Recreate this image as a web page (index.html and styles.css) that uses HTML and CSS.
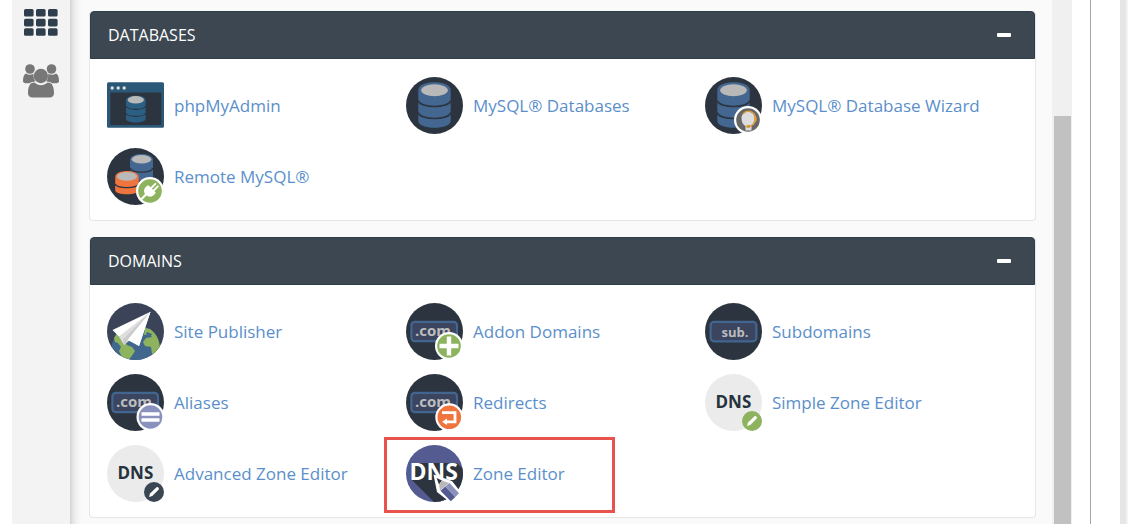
FILE: index.html
```
<!DOCTYPE html>
<html lang="en">
<head>
    <meta charset="UTF-8">
    <meta name="viewport" content="width=device-width, initial-scale=1.0">
    <title>cPanel</title>
    <link rel="stylesheet" href="styles.css">
</head>
<body>

<!-- shared icon parts -->
<svg class="sprite" aria-hidden="true">
    <symbol id="database" viewBox="0 0 57 57">
        <circle cx="28.5" cy="28.5" r="28.5" fill="#2c353f"/>
        <path d="M12.3 13.3C12.3 2.7 44.7 2.7 44.7 13.3V44C44.7 53 12.3 53 12.3 44Z" fill="#436791"/>
        <ellipse cx="28.5" cy="13.2" rx="13.3" ry="6" fill="#b9b9b9"/>
        <path d="M12.3 23.5C14 31.5 43 31.5 44.7 23.5M12.3 35.5C14 43.5 43 43.5 44.7 35.5" fill="none" stroke="#2c353f" stroke-width="1.7"/>
    </symbol>
    <symbol id="dotcom" viewBox="0 0 57 57">
        <circle cx="28.5" cy="28.5" r="28.5" fill="#2c353f"/>
        <rect x="5.4" y="18.8" width="45.6" height="19.4" rx="3.5" fill="#3b4560" stroke="#426690" stroke-width="2.2"/>
        <text x="9" y="32.5" font-size="15" font-weight="700" fill="#bdbdbd">.com</text>
    </symbol>
    <symbol id="dns" viewBox="0 0 57 57">
        <circle cx="28.5" cy="28.5" r="28.5" fill="#ebebeb"/>
        <text x="10.5" y="34" font-size="17" font-weight="700" fill="#26323c">DNS</text>
    </symbol>
    <symbol id="pencil" viewBox="0 0 20 20">
        <circle cx="10" cy="10" r="10"/>
        <path d="M5 15L6 11.6L12.5 5.2C13.5 4.3 15.6 6.3 14.7 7.4L8.3 14Z" fill="#fff"/>
    </symbol>
</svg>

<div class="page">
    <nav class="sidebar">
        <a href="#" aria-label="Home">
            <svg width="34" height="28" viewBox="0 0 34 28" fill="#2f3e4c">
                <rect x="0" y="0" width="9.6" height="7.6" rx="1.6"/><rect x="12" y="0" width="9.6" height="7.6" rx="1.6"/><rect x="24" y="0" width="9.6" height="7.6" rx="1.6"/>
                <rect x="0" y="9.8" width="9.6" height="7.6" rx="1.6"/><rect x="12" y="9.8" width="9.6" height="7.6" rx="1.6"/><rect x="24" y="9.8" width="9.6" height="7.6" rx="1.6"/>
                <rect x="0" y="19.2" width="9.6" height="7.6" rx="1.6"/><rect x="12" y="19.2" width="9.6" height="7.6" rx="1.6"/><rect x="24" y="19.2" width="9.6" height="7.6" rx="1.6"/>
            </svg>
        </a>
        <a href="#" aria-label="User Manager">
            <svg width="36" height="34" viewBox="0 0 36 34" fill="#777">
                <circle cx="7" cy="5" r="4.8"/>
                <circle cx="28.5" cy="5" r="4.8"/>
                <path d="M3 9.5C5.5 11.2 8 11 10.5 9.8C10.3 13 10.9 15.5 12.5 17.6C9.5 17.8 8 18.5 6.6 19.2H2.5C1 19.2 0 18.3 0 17C0 13.5 .8 10.5 3 9.5Z"/>
                <path d="M33 9.5C30.5 11.2 28 11 25.2 9.8C25.4 13 24.8 15.5 23.2 17.6C26.2 17.8 27.7 18.5 29.2 19.2H33.4C35 19.2 36 18.3 36 17C36 13.5 35.2 10.5 33 9.5Z"/>
                <circle cx="17.9" cy="12" r="7.2"/>
                <path d="M11.2 18.6C15.5 22 20.5 22 24.8 18.6C29.5 18.6 31 23.5 31 29C31 31.8 29.5 33.6 26.5 33.6H9.5C6.5 33.6 5 31.8 5 29C5 23.5 6.5 18.6 11.2 18.6Z"/>
            </svg>
        </a>
    </nav>

    <main class="content">
        <section class="panel">
            <div class="panel-head">
                <h2>DATABASES</h2>
                <button type="button" class="collapse" aria-label="Collapse Databases"></button>
            </div>
            <div class="panel-body">
                <a href="#" class="item">
                    <svg class="icon" viewBox="0 0 57 57">
                        <rect x="0" y="5.3" width="57" height="45.4" rx="1.5" fill="#2c5878"/>
                        <rect x="3.3" y="15.6" width="51" height="32.4" rx="1" fill="#2c353f"/>
                        <g fill="#ddd"><circle cx="5.2" cy="11" r="1.7"/><circle cx="11.2" cy="11" r="1.7"/><circle cx="17.2" cy="11" r="1.7"/></g>
                        <path d="M19 23C19 17.3 38.6 17.3 38.6 23V42C38.6 46.6 19 46.6 19 42Z" fill="#2c5f84"/>
                        <ellipse cx="28.8" cy="22.8" rx="8.2" ry="3.7" fill="#b9b9b9"/>
                        <path d="M19 29C20 33.5 37.6 33.5 38.6 29M19 36C20 40.5 37.6 40.5 38.6 36" fill="none" stroke="#2c353f" stroke-width="1.1"/>
                    </svg>
                    <span>phpMyAdmin</span>
                </a>
                <a href="#" class="item">
                    <svg class="icon"><use href="#database"/></svg>
                    <span>MySQL® Databases</span>
                </a>
                <a href="#" class="item">
                    <svg class="icon" viewBox="0 0 57 57">
                        <use href="#database"/>
                        <circle cx="43" cy="43" r="14" fill="#fff"/>
                        <circle cx="43" cy="43" r="11.8" fill="#666"/>
                        <path d="M36.5 41C36.5 32.5 49.5 32.5 49.5 41C49.5 45 48 47 46.5 48.5V53.5H40.5V49C37.8 47.5 36.5 45 36.5 41Z" fill="#ddd"/>
                        <path d="M38 37C42 31.5 50.5 34.5 50.5 41.5C50.5 46.5 47.5 49 42.5 49.5" fill="none" stroke="#e0a040" stroke-width="1.3"/>
                        <rect x="49" y="39.5" width="2.6" height="5" rx="1" fill="#e0a040"/>
                        <rect x="41.3" y="48.3" width="4" height="2.4" rx="1" fill="#d58f2c"/>
                    </svg>
                    <span>MySQL® Database Wizard</span>
                </a>
                <a href="#" class="item">
                    <svg class="icon" viewBox="0 0 57 57">
                        <circle cx="28.5" cy="28.5" r="28.5" fill="#2c353f"/>
                        <path d="M23 11.6C23 4 46 4 46 11.6V28C46 34 23 34 23 28Z" fill="#436791"/>
                        <ellipse cx="34.5" cy="11.3" rx="9.8" ry="4.3" fill="#b9b9b9"/>
                        <path d="M23 20C24.5 25.5 44.5 25.5 46 20" fill="none" stroke="#2c353f" stroke-width="1.4"/>
                        <path d="M8.2 29C8.2 21 31.7 21 31.7 29V42C31.7 47.8 8.2 47.8 8.2 42Z" fill="#f0743e"/>
                        <ellipse cx="20" cy="28.4" rx="10" ry="4.3" fill="#b9b9b9"/>
                        <path d="M8.2 36C10 40.8 30 40.8 31.7 36" fill="none" stroke="#2c353f" stroke-width="1.4"/>
                        <circle cx="43" cy="43" r="14" fill="#fff"/>
                        <circle cx="43" cy="43" r="11.8" fill="#8db35f"/>
                        <path d="M41.5 37.2L48.8 44.5C47 48.5 42.5 49.8 39.5 47.6L35 52L33.5 50.4L38 46C35.8 42.8 37.5 38.5 41.5 37.2Z" fill="#fff"/>
                        <path d="M44.2 40L48.4 35.8M46.7 42.5L50.9 38.3" stroke="#fff" stroke-width="1.8" stroke-linecap="round"/>
                    </svg>
                    <span>Remote MySQL®</span>
                </a>
            </div>
        </section>

        <section class="panel">
            <div class="panel-head">
                <h2>DOMAINS</h2>
                <button type="button" class="collapse" aria-label="Collapse Domains"></button>
            </div>
            <div class="panel-body">
                <a href="#" class="item">
                    <svg class="icon" viewBox="0 0 57 57">
                        <clipPath id="disc"><circle cx="28.5" cy="28.5" r="28.5"/></clipPath>
                        <g clip-path="url(#disc)">
                            <rect width="57" height="57" fill="#3b4358"/>
                            <circle cx="28.7" cy="46" r="24.2" fill="#41678f"/>
                            <path d="M7 35L10 30L16 36L20 42L25 44L28 48L24 54L21 57L15 54L12 48L14 44L11 40L8 39Z" fill="#8db35f"/>
                            <path d="M38 25L43 26C49 30 52.6 37 52.8 44L49 52L45 51L44 44L38 43L36 39L39 35L45 34L42 31L37 32Z" fill="#8db35f"/>
                            <path d="M40 29L45 31L44 33L39 31Z" fill="#41678f"/>
                        </g>
                        <path d="M43.5 8.8L5.5 27L12 33.5L23 36L32 43Z" fill="#fff"/>
                        <path d="M43.5 8.8L12 33.5L17 42L23 37Z" fill="#dedede"/>
                        <path d="M43.5 8.8L17 42L16 36.5Z" fill="#cbcbcb"/>
                        <path d="M43.5 8.8L20.5 37L32 43Z" fill="#fff"/>
                    </svg>
                    <span>Site Publisher</span>
                </a>
                <a href="#" class="item">
                    <svg class="icon" viewBox="0 0 57 57">
                        <use href="#dotcom"/>
                        <circle cx="43" cy="43" r="14" fill="#fff"/>
                        <circle cx="43" cy="43" r="11.8" fill="#8db35f"/>
                        <path d="M43 33.5V52.5M33.5 43H52.5" stroke="#fff" stroke-width="4.4"/>
                    </svg>
                    <span>Addon Domains</span>
                </a>
                <a href="#" class="item">
                    <svg class="icon" viewBox="0 0 57 57">
                        <circle cx="28.5" cy="28.5" r="28.5" fill="#2c353f"/>
                        <rect x="5.6" y="18.9" width="45.8" height="19.4" rx="3.5" fill="#3b4560" stroke="#426690" stroke-width="2.2"/>
                        <text x="16.5" y="33.5" font-size="13" font-weight="700" fill="#bdbdbd">sub.</text>
                    </svg>
                    <span>Subdomains</span>
                </a>
                <a href="#" class="item">
                    <svg class="icon" viewBox="0 0 57 57">
                        <use href="#dotcom"/>
                        <circle cx="43.5" cy="43" r="14" fill="#fff"/>
                        <circle cx="43.5" cy="43" r="11.8" fill="#8a91bd"/>
                        <path d="M34.5 40H52.5M34.5 46H52.5" stroke="#fff" stroke-width="3.4"/>
                    </svg>
                    <span>Aliases</span>
                </a>
                <a href="#" class="item">
                    <svg class="icon" viewBox="0 0 57 57">
                        <use href="#dotcom"/>
                        <circle cx="43.3" cy="43.3" r="14" fill="#fff"/>
                        <circle cx="43.3" cy="43.3" r="11.8" fill="#f0743e"/>
                        <path d="M36 38.6H49V47.8H40" fill="none" stroke="#fff" stroke-width="2.8"/>
                        <path d="M41 44.5V51L36 47.8Z" fill="#fff"/>
                    </svg>
                    <span>Redirects</span>
                </a>
                <a href="#" class="item">
                    <svg class="icon" viewBox="0 0 57 57">
                        <use href="#dns"/>
                        <use href="#pencil" x="37" y="37" width="20" height="20" fill="#8db35f"/>
                    </svg>
                    <span>Simple Zone Editor</span>
                </a>
                <a href="#" class="item">
                    <svg class="icon" viewBox="0 0 57 57">
                        <use href="#dns"/>
                        <use href="#pencil" x="37" y="37" width="20" height="20" fill="#3a4651"/>
                    </svg>
                    <span>Advanced Zone Editor</span>
                </a>
                <a href="#" class="item highlight">
                    <svg class="icon" viewBox="0 0 57 57">
                        <g clip-path="url(#disc)">
                            <rect width="57" height="57" fill="#535b91"/>
                            <path d="M6 18H51L57 24V57H28L6 35Z" fill="#2c353f"/>
                        </g>
                        <text x="3.5" y="35" font-size="23" font-weight="700" fill="#fff">DNS</text>
                        <path d="M27.5 29.5L46 36L55 47.5L45 58L31 47Z" fill="#fff"/>
                        <path d="M30.6 33L36 35.5L33 39.5Z" fill="#2c353f"/>
                        <path d="M36 35.5L43 38L34 45.4L33 39.5Z" fill="#b9b9b9"/>
                        <path d="M34.5 45.8L39.3 41.4L49.3 52L44.8 56.3Z" fill="#535b91"/>
                        <path d="M39.3 41.4L43.5 38L53 48.3L49.3 52Z" fill="#8a91bd"/>
                    </svg>
                    <span>Zone Editor</span>
                </a>
            </div>
        </section>
    </main>

    <div class="scroll-track"><div class="scroll-thumb"></div></div>
    <div class="window-edge"></div>
</div>

</body>
</html>
```
FILE: styles.css
```
* {
  box-sizing: border-box;
}
body {
  margin: 0;
  font-family: "Open Sans", "Noto Sans", sans-serif;
  font-size: 17px;
  background-color: #fff;
}
a {
  color: #5b8fcb;
  text-decoration: none;
}
.sprite {
  display: none;
}
.page {
  display: flex;
  height: 100vh;
  padding-left: 12px;
  overflow: hidden;
}

/* left menu */
.sidebar {
  display: flex;
  flex-direction: column;
  align-items: center;
  gap: 27px;
  flex: 0 0 58px;
  padding-top: 9px;
  background-color: #f3f3f3;
}
.sidebar svg {
  display: block;
}

/* panels */
.content {
  flex: 1;
  min-width: 0;
  padding: 11px 16px 0 19px;
  background: linear-gradient(to right, #d2d2d2, #e6e6e6 3px, #f3f3f3 7px, #fafafa 12px);
}
.panel {
  margin-bottom: 16px;
  border: 1px solid #e6e6e6;
  border-top: 0;
  border-radius: 4px;
  background-color: #fff;
}
.panel-head {
  display: flex;
  align-items: center;
  justify-content: space-between;
  height: 48px;
  padding: 0 23px 0 17px;
  border: 1px solid #303e4b;
  border-radius: 4px 4px 0 0;
  background-color: #3c4752;
}
.panel-head h2 {
  margin: 0;
  font-size: 16px;
  font-weight: 400;
  color: #fff;
}
.collapse {
  width: 14px;
  height: 20px;
  padding: 0;
  border: 0;
  background: transparent;
  cursor: pointer;
}
.collapse::before {
  content: "";
  display: block;
  height: 4px;
  border-radius: 1px;
  background-color: #fff;
}
.panel-body {
  display: grid;
  grid-template-columns: repeat(3, 1fr);
  row-gap: 14px;
  padding: 18px 31px 15px 17px;
}
.item {
  position: relative;
  display: flex;
  align-items: center;
  gap: 10px;
}
.item:hover span {
  text-decoration: underline;
}
.icon {
  flex: none;
  width: 57px;
  height: 57px;
}

/* red frame lying over the item */
.highlight::after {
  content: "";
  position: absolute;
  top: -8px;
  right: 90px;
  bottom: -11px;
  left: -22px;
  border: 3px solid #e9534d;
}

/* right side */
.scroll-track {
  flex: 0 0 20px;
  padding: 116px 1px 0 2px;
  background-color: #f0f0f0;
}
.scroll-thumb {
  height: 100%;
  background-color: #c1c1c1;
}
.window-edge {
  flex: 0 0 56px;
  background: linear-gradient(#a3a3a3, #a3a3a3) 18px 0 / 1px 100% no-repeat,
    linear-gradient(to right, #e6e6e6 5px, #f8f8f8 8px) right / 8px 100% no-repeat;
}
```
